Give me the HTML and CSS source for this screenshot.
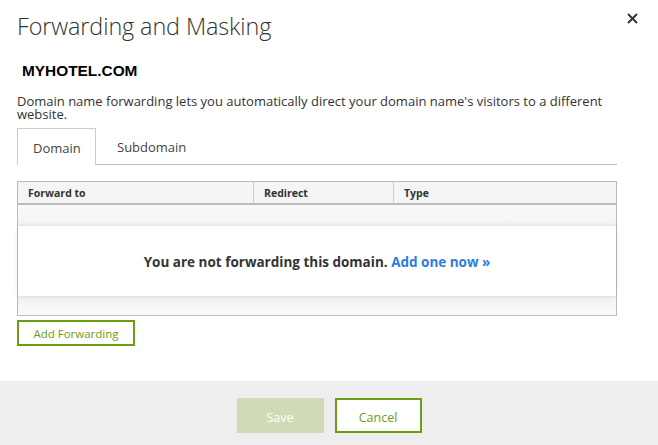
FILE: index.html
```html
<!DOCTYPE html>
<html>
<head>
<meta charset="utf-8">
<link rel="stylesheet" href="styles.css">
</head>
<body>
<div class="dialog">
  <div class="content">
    <div class="head">
      <h1 class="title">Forwarding and Masking</h1>
      <button class="close" aria-label="Close">
        <svg width="11" height="11" viewBox="0 0 11 11"><path d="M1 1L10 10M10 1L1 10" stroke="#333" stroke-width="2" fill="none"/></svg>
      </button>
    </div>
    <div class="domain">MYHOTEL.COM</div>
    <p class="desc">Domain name forwarding lets you automatically direct your domain name's visitors to a different website.</p>
    <div class="tabs">
      <div class="tab active">Domain</div>
      <div class="tab">Subdomain</div>
      <div class="tab-fill"></div>
    </div>
    <div class="table">
      <div class="thead">
        <div class="th">Forward to</div>
        <div class="th">Redirect</div>
        <div class="th">Type</div>
      </div>
      <div class="tbody">
        <div class="strip top"></div>
        <div class="empty">You are not forwarding this domain. <a class="link" href="#">Add one now »</a></div>
        <div class="strip bottom"></div>
      </div>
    </div>
    <button class="btn add">Add Forwarding</button>
  </div>
  <div class="footer">
    <button class="btn save" disabled>Save</button>
    <button class="btn cancel">Cancel</button>
  </div>
</div>
</body>
</html>
```
FILE: styles.css
```css
html, body {
  margin: 0;
  padding: 0;
  background: #fff;
}
body {
  font-family: "Open Sans", "Noto Sans", sans-serif;
  color: #333;
  width: 658px;
  height: 445px;
  overflow: hidden;
}
.dialog {
  display: flex;
  flex-direction: column;
  height: 445px;
}
.content {
  padding: 0 41px 0 17px;
  flex: 1;
}
.head {
  display: flex;
  justify-content: space-between;
  align-items: flex-start;
  margin-right: -21px;
}
.title {
  margin: 9px 0 0 0;
  font-size: 23.4px;
  font-weight: 300;
  line-height: 34px;
  color: #333;
  letter-spacing: -0.1px;
}
.close {
  border: 0;
  background: none;
  padding: 0;
  margin: 13px 0 0 0;
  width: 11px;
  height: 11px;
  display: block;
}
.close svg { display: block; }
.domain {
  font-family: "Liberation Sans", Arial, sans-serif;
  font-weight: bold;
  font-size: 15.4px;
  color: #000;
  margin: 20px 0 0 5px;
  line-height: 16px;
}
.desc {
  font-size: 13px;
  line-height: 12.5px;
  margin: 16px 0 0 0;
  color: #333;
}
.tabs {
  display: flex;
  margin-top: 8px;
  height: 37px;
}
.tab {
  font-size: 13px;
  color: #444;
  padding: 0 16px;
  line-height: 38px;
  border-bottom: 1px solid #bbb;
}
.tab.active {
  border: 1px solid #ccc;
  border-bottom: 0;
  padding: 0 15px;
  width: 47px;
}
.tab + .tab {
  padding-left: 21px;
  padding-right: 21px;
}
.tab-fill {
  flex: 1;
  border-bottom: 1px solid #bbb;
}
.table {
  margin-top: 16px;
  border: 1px solid #bbb;
}
.thead {
  display: grid;
  grid-template-columns: 235px 140px 1fr;
  background: #f5f5f5;
  border-bottom: 2px solid #bbb;
  height: 21px;
}
.th {
  font-size: 10.5px;
  font-weight: bold;
  color: #333;
  line-height: 22px;
  padding-left: 10px;
}
.th + .th {
  border-left: 1px solid #ccc;
}
.tbody {
  display: flex;
  flex-direction: column;
}
.strip {
  background: linear-gradient(to bottom, #fafafa, #f4f4f4);
}
.strip.top {
  height: 20px;
  border-bottom: 1px solid #eee;
}
.strip.bottom {
  height: 18px;
  border-top: 1px solid #eee;
  background: linear-gradient(to bottom, #f3f3f3, #fafafa);
}
.empty {
  height: 70px;
  background: #fff;
  box-shadow: 0 2px 6px rgba(0,0,0,0.06), 0 -2px 6px rgba(0,0,0,0.04);
  text-align: center;
  font-size: 13.5px;
  font-weight: bold;
  color: #333;
  line-height: 72px;
  position: relative;
}
.link {
  color: #2b7de0;
  text-decoration: none;
}
.btn {
  font-family: "Open Sans", "Noto Sans", sans-serif;
  background: #fff;
  cursor: pointer;
}
.add {
  margin-top: 4px;
  display: block;
  width: 118px;
  height: 26px;
  border: 2px solid #6b9e10;
  color: #6b9e10;
  font-size: 11.5px;
  padding: 0;
  line-height: 21px;
}
.footer {
  background: #eeeeee;
  height: 64px;
  display: flex;
  justify-content: center;
  align-items: flex-start;
  gap: 11px;
  padding-top: 17px;
  box-sizing: border-box;
}
.save {
  width: 87px;
  height: 35px;
  border: 0;
  background: #cfdbb6;
  color: #fff;
  font-size: 12.5px;
  padding: 3px 0 0 0;
}
.cancel {
  width: 87px;
  height: 35px;
  border: 2px solid #6b9e10;
  background: #fff;
  color: #6b9e10;
  font-size: 12.5px;
  padding: 3px 0 0 0;
}
```
